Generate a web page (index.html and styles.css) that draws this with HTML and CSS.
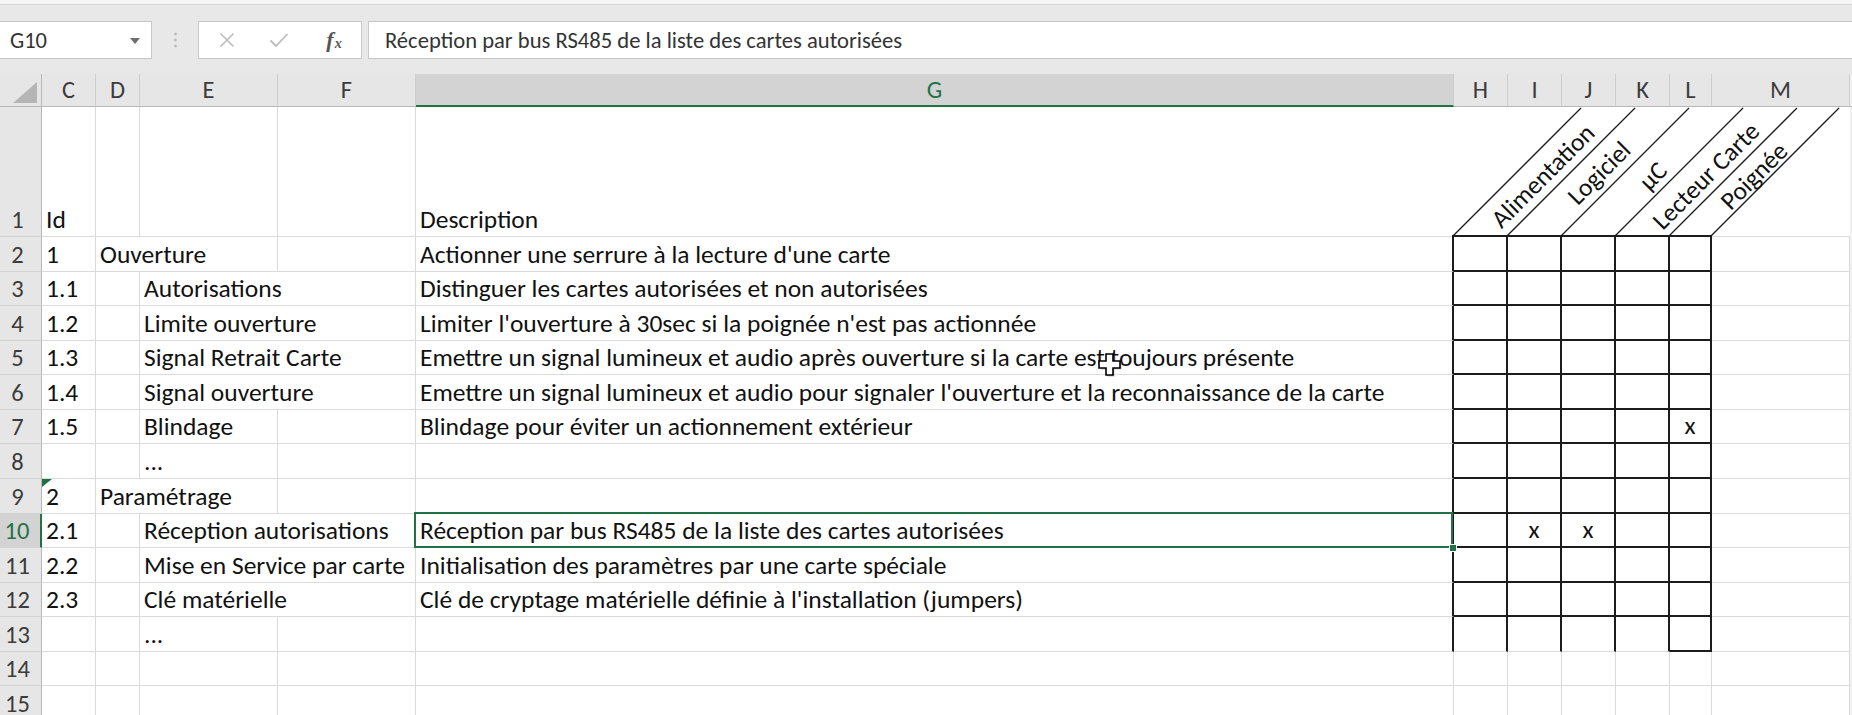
FILE: index.html
```html
<!DOCTYPE html>
<html lang="fr">
<head>
<meta charset="utf-8">
<title>Excel</title>
<link rel="stylesheet" href="styles.css">
</head>
<body>
<div class="top"></div>
<div class="fbar">
  <div class="namebox"><span>G10</span>
    <svg class="dd" width="10" height="6" viewBox="0 0 10 6"><path d="M0 0H10L5 6Z" fill="#6e6e6e"/></svg>
  </div>
  <div class="sep">
    <svg width="3" height="16" viewBox="0 0 3 16"><circle cx="1.5" cy="2" r="1.3" fill="#b4b4b4"/><circle cx="1.5" cy="8" r="1.3" fill="#b4b4b4"/><circle cx="1.5" cy="14" r="1.3" fill="#b4b4b4"/></svg>
  </div>
  <div class="btns">
    <span class="btn"><svg width="16" height="16" viewBox="0 0 16 16"><path d="M1.5 1.5L14.5 14.5M14.5 1.5L1.5 14.5" stroke="#bdbdbd" stroke-width="1.6"/></svg></span>
    <span class="btn"><svg width="20" height="16" viewBox="0 0 20 16"><path d="M1.5 8.5L7 14L18.5 2" stroke="#bdbdbd" stroke-width="1.8" fill="none"/></svg></span>
    <span class="btn fx"><i>f</i><span class="sx">x</span></span>
  </div>
  <div class="finput">Réception par bus RS485 de la liste des cartes autorisées</div>
</div>

<div class="sheet">
  <!-- header -->
  <div class="ch corner"><svg width="24" height="21" viewBox="0 0 24 21"><path d="M24 0V21H0Z" fill="#b5b5b5"/></svg></div>
  <div class="ch">C</div><div class="ch">D</div><div class="ch">E</div><div class="ch">F</div>
  <div class="ch sel">G</div>
  <div class="ch">H</div><div class="ch">I</div><div class="ch">J</div><div class="ch">K</div><div class="ch">L</div><div class="ch">M</div>
  <div class="ch edge"></div>

  <!-- row 1 -->
  <div class="rh">1</div>
  <div class="c">Id</div><div class="c"></div><div class="c"></div><div class="c"></div>
  <div class="c nr">Description</div>
  <div class="diag">
    <svg width="396" height="130" viewBox="0 0 396 130">
      <rect x="-2" y="128" width="260" height="2" fill="#1c1c1c"/>
      <rect x="258" y="129" width="138" height="1" fill="#dadada"/>
      <g stroke="#1c1c1c" stroke-width="1.3">
        <line x1="-1" y1="129" x2="127" y2="1"/>
        <line x1="53" y1="129" x2="181" y2="1"/>
        <line x1="107" y1="129" x2="235" y2="1"/>
        <line x1="161" y1="129" x2="289" y2="1"/>
        <line x1="215" y1="129" x2="343" y2="1"/>
        <line x1="257" y1="129" x2="385" y2="1"/>
      </g>
      <g class="rot">
        <text transform="translate(89 69) rotate(-45)" text-anchor="middle" dy="0.33em">Alimentation</text>
        <text transform="translate(145 66) rotate(-45)" text-anchor="middle" dy="0.33em">Logiciel</text>
        <text transform="translate(199 69) rotate(-45)" text-anchor="middle" dy="0.33em">µC</text>
        <text transform="translate(252 69) rotate(-45)" text-anchor="middle" dy="0.33em">Lecteur Carte</text>
        <text transform="translate(300 69) rotate(-45)" text-anchor="middle" dy="0.33em">Poignée</text>
      </g>
    </svg>
  </div>
  <div class="edge"></div>

  <!-- row 2 -->
  <div class="rh">2</div>
  <div class="c">1</div><div class="c nr">Ouverture</div><div class="c"></div><div class="c"></div>
  <div class="c gb">Actionner une serrure à la lecture d'une carte</div>
  <div class="t"></div><div class="t"></div><div class="t"></div><div class="t"></div><div class="t"></div>
  <div class="c"></div><div class="edge"></div>

  <!-- row 3 -->
  <div class="rh">3</div>
  <div class="c">1.1</div><div class="c"></div><div class="c nr">Autorisations</div><div class="c"></div>
  <div class="c gb">Distinguer les cartes autorisées et non autorisées</div>
  <div class="t"></div><div class="t"></div><div class="t"></div><div class="t"></div><div class="t"></div>
  <div class="c"></div><div class="edge"></div>

  <!-- row 4 -->
  <div class="rh">4</div>
  <div class="c">1.2</div><div class="c"></div><div class="c nr">Limite ouverture</div><div class="c"></div>
  <div class="c gb">Limiter l'ouverture à 30sec si la poignée n'est pas actionnée</div>
  <div class="t"></div><div class="t"></div><div class="t"></div><div class="t"></div><div class="t"></div>
  <div class="c"></div><div class="edge"></div>

  <!-- row 5 -->
  <div class="rh">5</div>
  <div class="c">1.3</div><div class="c"></div><div class="c nr">Signal Retrait Carte</div><div class="c"></div>
  <div class="c gb">Emettre un signal lumineux et audio après ouverture si la carte est toujours présente</div>
  <div class="t"></div><div class="t"></div><div class="t"></div><div class="t"></div><div class="t"></div>
  <div class="c"></div><div class="edge"></div>

  <!-- row 6 -->
  <div class="rh">6</div>
  <div class="c">1.4</div><div class="c"></div><div class="c nr">Signal ouverture</div><div class="c"></div>
  <div class="c gb">Emettre un signal lumineux et audio pour signaler l'ouverture et la reconnaissance de la carte</div>
  <div class="t"></div><div class="t"></div><div class="t"></div><div class="t"></div><div class="t"></div>
  <div class="c"></div><div class="edge"></div>

  <!-- row 7 -->
  <div class="rh">7</div>
  <div class="c">1.5</div><div class="c"></div><div class="c">Blindage</div><div class="c"></div>
  <div class="c gb">Blindage pour éviter un actionnement extérieur</div>
  <div class="t"></div><div class="t"></div><div class="t"></div><div class="t"></div><div class="t ctr">x</div>
  <div class="c"></div><div class="edge"></div>

  <!-- row 8 -->
  <div class="rh">8</div>
  <div class="c"></div><div class="c"></div><div class="c">...</div><div class="c"></div>
  <div class="c gb"></div>
  <div class="t"></div><div class="t"></div><div class="t"></div><div class="t"></div><div class="t"></div>
  <div class="c"></div><div class="edge"></div>

  <!-- row 9 -->
  <div class="rh">9</div>
  <div class="c err">2</div><div class="c nr">Paramétrage</div><div class="c"></div><div class="c"></div>
  <div class="c gb"></div>
  <div class="t"></div><div class="t"></div><div class="t"></div><div class="t"></div><div class="t"></div>
  <div class="c"></div><div class="edge"></div>

  <!-- row 10 -->
  <div class="rh sel">10</div>
  <div class="c">2.1</div><div class="c"></div><div class="c nr">Réception autorisations</div><div class="c"></div>
  <div class="c gb active">Réception par bus RS485 de la liste des cartes autorisées<span class="handle"></span></div>
  <div class="t"></div><div class="t ctr">x</div><div class="t ctr">x</div><div class="t"></div><div class="t"></div>
  <div class="c"></div><div class="edge"></div>

  <!-- row 11 -->
  <div class="rh">11</div>
  <div class="c">2.2</div><div class="c"></div><div class="c nr">Mise en Service par carte</div><div class="c"></div>
  <div class="c gb">Initialisation des paramètres par une carte spéciale</div>
  <div class="t"></div><div class="t"></div><div class="t"></div><div class="t"></div><div class="t"></div>
  <div class="c"></div><div class="edge"></div>

  <!-- row 12 -->
  <div class="rh">12</div>
  <div class="c">2.3</div><div class="c"></div><div class="c nr">Clé matérielle</div><div class="c"></div>
  <div class="c gb">Clé de cryptage matérielle définie à l'installation (jumpers)</div>
  <div class="t"></div><div class="t"></div><div class="t"></div><div class="t"></div><div class="t"></div>
  <div class="c"></div><div class="edge"></div>

  <!-- row 13 -->
  <div class="rh">13</div>
  <div class="c"></div><div class="c"></div><div class="c">...</div><div class="c"></div>
  <div class="c gb"></div>
  <div class="t open"></div><div class="t open"></div><div class="t open"></div><div class="t open"></div><div class="t"></div>
  <div class="c"></div><div class="edge"></div>

  <!-- row 14 -->
  <div class="rh">14</div>
  <div class="c"></div><div class="c"></div><div class="c"></div><div class="c"></div><div class="c"></div>
  <div class="c"></div><div class="c"></div><div class="c"></div><div class="c"></div><div class="c"></div>
  <div class="c"></div><div class="edge"></div>

  <!-- row 15 -->
  <div class="rh">15</div>
  <div class="c"></div><div class="c"></div><div class="c"></div><div class="c"></div><div class="c"></div>
  <div class="c"></div><div class="c"></div><div class="c"></div><div class="c"></div><div class="c"></div>
  <div class="c"></div><div class="edge"></div>
</div>

<svg class="cursor" width="26" height="26" viewBox="0 0 26 26">
  <path d="M9.5 2.5H16.5V9.5H23.5V16.5H16.5V23.5H9.5V16.5H2.5V9.5H9.5Z" fill="#9a9a9a" opacity="0.6"/>
  <path d="M8 1H15V8H22V15H15V22H8V15H1V8H8Z" fill="#fff" stroke="#000" stroke-width="1.6" stroke-linejoin="miter"/>
</svg>
</body>
</html>
```
FILE: styles.css
```css
* { box-sizing: border-box; }

html, body { margin: 0; padding: 0; }

body {
  width: 1852px;
  height: 715px;
  overflow: hidden;
  position: relative;
  background: #e7e7e7;
  font-family: Carlito, Calibri, "Liberation Sans", sans-serif;
  color: #111;
}

/* ---------- top strip & formula bar ---------- */
.top {
  height: 5px;
  background: #f6f6f6;
  border-bottom: 1px solid #d5d5d5;
}

.fbar {
  display: flex;
  align-items: stretch;
  height: 69px;
  padding: 16px 0 15px 0;
  background: #e8e8e8;
}

.namebox {
  width: 152px;
  background: #fff;
  border: 1px solid #c8c8c8;
  border-left: none;
  display: flex;
  align-items: center;
  padding-left: 10px;
  font-size: 22.5px;
  color: #333;
}

.namebox .dd { margin-left: auto; margin-right: 11px; margin-top: 1px; }

.sep {
  width: 46px;
  display: flex;
  align-items: center;
  justify-content: center;
}

.btns {
  width: 164px;
  background: #fff;
  border: 1px solid #c8c8c8;
  display: flex;
  align-items: center;
  padding-left: 2px;
}

.btn {
  width: 52px;
  display: flex;
  align-items: center;
  justify-content: center;
}

.fx {
  font-family: "Liberation Serif", serif;
  color: #555;
  font-size: 22px;
  padding-left: 6px;
}
.fx i { font-style: italic; font-weight: bold; }
.fx .sx { font-style: italic; font-size: 14px; margin-top: 7px; margin-left: 1px; font-weight: bold; }

.finput {
  flex: 1;
  margin-left: 6px;
  background: #fff;
  border: 1px solid #c8c8c8;
  border-right: none;
  display: flex;
  align-items: center;
  padding-left: 16px;
  font-size: 22.6px;
  color: #333;
  white-space: nowrap;
}

/* ---------- sheet ---------- */
.sheet {
  display: grid;
  grid-template-columns: 42px 54px 44px 138px 138px 1038px 54px 54px 54px 54px 42px 138px 2px;
  grid-template-rows: 33px 130px repeat(14, 34.57px);
  background: #fff;
  height: 641px;
}

.ch {
  background: #e6e6e6;
  border-right: 1px solid #cdcdcd;
  border-bottom: 1px solid #b7b7b7;
  display: flex;
  align-items: center;
  justify-content: center;
  font-size: 24.5px;
  color: #3c3c3c;
}
.ch.corner {
  justify-content: flex-end;
  align-items: flex-end;
  padding: 0 4px 3px 0;
  border-right: 1px solid #b7b7b7;
}
.ch.sel {
  background: #d3d3d3;
  border-bottom: 2px solid #217346;
  color: #217346;
}
.ch.edge { border-right: none; }

.rh {
  background: #e6e6e6;
  border-right: 1px solid #b7b7b7;
  border-bottom: 1px solid #d2d2d2;
  display: flex;
  align-items: flex-end;
  justify-content: center;
  padding: 0 6px 1px 0;
  font-size: 24.5px;
  color: #3c3c3c;
  line-height: normal;
}
.rh.sel {
  background: #d3d3d3;
  color: #217346;
  border-right: 2px solid #217346;
}

.c, .t {
  display: flex;
  align-items: flex-end;
  padding: 0 0 1px 4px;
  font-size: 25.5px;
  white-space: nowrap;
  min-width: 0;
  line-height: normal;
}

.c {
  border-right: 1px solid #dadada;
  border-bottom: 1px solid #dadada;
}
.c.nr { border-right: none; }
.c.gb { border-right: 2px solid #1c1c1c; }

.t {
  border-right: 2px solid #1c1c1c;
  border-bottom: 2px solid #1c1c1c;
}
.t.open { border-bottom: 1px solid #dadada; }
.ctr { justify-content: center; padding-left: 0; }

.edge { background: #f1f1f1; }

.diag {
  grid-column: span 6;
  overflow: visible;
}
.diag svg { display: block; overflow: visible; }
.rot text {
  font-family: Carlito, Calibri, "Liberation Sans", sans-serif;
  font-size: 25.5px;
  fill: #111;
}

/* error indicator */
.err { position: relative; }
.err::before {
  content: "";
  position: absolute;
  left: 0;
  top: 0;
  border-top: 8px solid #1e7145;
  border-right: 10px solid transparent;
}

/* active cell */
.active { position: relative; }
.active::after {
  content: "";
  position: absolute;
  left: -2px;
  top: -2px;
  right: -1px;
  bottom: -1px;
  border: 2px solid #217346;
}
.handle {
  position: absolute;
  right: -5px;
  bottom: -5px;
  width: 8px;
  height: 8px;
  background: #217346;
  border: 1px solid #fff;
  z-index: 2;
}

.cursor {
  position: absolute;
  left: 1098px;
  top: 353px;
}
```
